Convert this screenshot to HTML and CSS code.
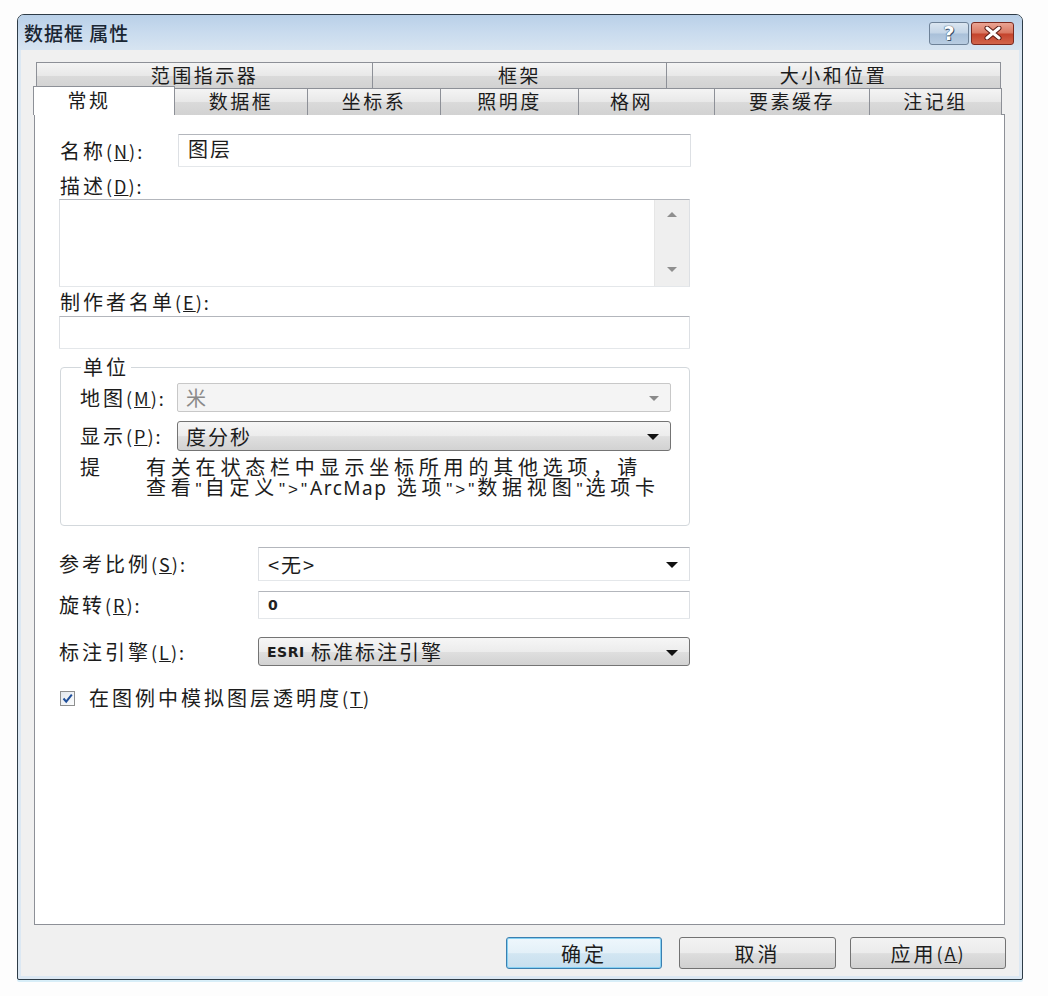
FILE: index.html
```html
<!DOCTYPE html>
<html lang="zh-CN">
<head>
<meta charset="utf-8">
<title>数据框 属性</title>
<link rel="stylesheet" href="styles.css">
</head>
<body>
<div class="desk">
  <div class="window">
    <div class="titlebar">
      <span class="title">数据框 属性</span>
      <div class="tb-btns">
        <span class="tb-btn tb-help">?</span>
        <span class="tb-btn tb-close">
          <svg width="18" height="14" viewBox="0 0 18 14"><path d="M3 2 L15 12 M15 2 L3 12" stroke="#5a1a12" stroke-width="5" stroke-linecap="round"/><path d="M3 2 L15 12 M15 2 L3 12" stroke="#ffffff" stroke-width="3" stroke-linecap="round"/></svg>
        </span>
      </div>
    </div>
    <div class="client">
      <div class="tabs">
        <div class="tabrow row1">
          <div class="tab">范围指示器</div>
          <div class="tab">框架</div>
          <div class="tab">大小和位置</div>
        </div>
        <div class="tabrow row2">
          <div class="tab selected">常规</div>
          <div class="tab">数据框</div>
          <div class="tab">坐标系</div>
          <div class="tab">照明度</div>
          <div class="tab tab-grid">格网</div>
          <div class="tab">要素缓存</div>
          <div class="tab">注记组</div>
        </div>
      </div>
      <div class="panel">
        <div class="form">
          <div class="name-row">
            <span class="lbl">名称<span class="mn">(<u>N</u>):</span></span>
            <div class="input name-input">图层</div>
          </div>
          <div class="lbl block desc-lbl">描述<span class="mn">(<u>D</u>):</span></div>
          <div class="textarea">
            <div class="vscroll"><span class="sarr up"></span><span class="sarr down"></span></div>
          </div>
          <div class="lbl block credit-lbl">制作者名单<span class="mn">(<u>E</u>):</span></div>
          <div class="input credit-input"></div>

          <fieldset class="group">
            <legend>单位</legend>
            <div class="grow">
              <span class="lbl">地图<span class="mn">(<u>M</u>):</span></span>
              <div class="combo disabled">米<span class="caret"></span></div>
            </div>
            <div class="grow grow2">
              <span class="lbl">显示<span class="mn">(<u>P</u>):</span></span>
              <div class="combo button">度分秒<span class="caret"></span></div>
            </div>
            <div class="tip">
              <span class="tip-head">提</span>
              <span class="tip-text">有关在状态栏中显示坐标所用的其他选项，请<br>查看<span class="q">"</span>自定义<span class="q">"&gt;"</span><span class="latin">ArcMap</span> 选项<span class="q">"&gt;"</span>数据视图<span class="q">"</span>选项卡</span>
            </div>
          </fieldset>

          <div class="brow brow1">
            <span class="lbl">参考比例<span class="mn">(<u>S</u>):</span></span>
            <div class="combo edit">&lt;无&gt;<span class="caret"></span></div>
          </div>
          <div class="brow brow2">
            <span class="lbl">旋转<span class="mn">(<u>R</u>):</span></span>
            <div class="input rot-input">0</div>
          </div>
          <div class="brow brow3">
            <span class="lbl">标注引擎<span class="mn">(<u>L</u>):</span></span>
            <div class="combo button"><span class="esri">ESRI</span>&nbsp;标准标注引擎<span class="caret"></span></div>
          </div>
          <div class="check-row">
            <span class="checkbox">
              <svg width="13" height="13" viewBox="0 0 13 13"><path d="M2.5 6.5 L5.2 9.6 L10.8 2.6" fill="none" stroke="#1f4f9a" stroke-width="2"/></svg>
            </span>
            <span class="lbl">在图例中模拟图层透明度<span class="mn">(<u>T</u>)</span></span>
          </div>
        </div>
      </div>
      <div class="buttons">
        <div class="btn default">确定</div>
        <div class="btn">取消</div>
        <div class="btn">应用<span class="mn">(<u>A</u>)</span></div>
      </div>
    </div>
  </div>
</div>
</body>
</html>
```

FILE: styles.css
```css
* { box-sizing: border-box; }
html, body { margin: 0; padding: 0; background: #fdfdfd; }
body {
  font-family: "Noto Sans CJK SC", "Noto Sans", sans-serif;
  color: #1c1c1c;
  font-size: 20px;
}
.desk {
  width: 1048px;
  height: 996px;
  padding: 14px 0 0 17px;
}
.window {
  width: 1006px;
  height: 966px;
  border: 1px solid #2e3c47;
  border-radius: 7px 7px 2px 2px;
  background: #dce8f3;
  display: flex;
  flex-direction: column;
  box-shadow: 0 2px 0 #d8eef8;
}
.titlebar {
  height: 35px;
  flex: none;
  display: flex;
  align-items: center;
  justify-content: space-between;
  padding: 0 8px 0 6px;
  background: linear-gradient(#b9d0e8, #c9dbee 50%, #d7e4f1);
  border-radius: 6px 6px 0 0;
}
.title {
  font-size: 19px;
  letter-spacing: 1px;
  color: #1a2633;
  font-weight: 500;
}
.tb-btns { display: flex; gap: 2px; margin-top: 1px; }
.tb-btn {
  height: 23px;
  border-radius: 3px;
  display: flex;
  align-items: center;
  justify-content: center;
}
.tb-help {
  width: 40px;
  border: 1px solid #6e8298;
  background: linear-gradient(#dbe6f1, #c3d4e6 48%, #a9c0d9 52%, #b9cde2);
  color: #ffffff;
  font-family: "DejaVu Sans", sans-serif;
  font-weight: bold;
  font-size: 19px;
  text-shadow: 0 0 1px #3d5168, 0 0 1px #3d5168, 1px 1px 0 #3d5168;
}
.tb-close {
  width: 43px;
  border: 1px solid #7b2a20;
  background: linear-gradient(#eaa493, #d97862 48%, #c4432c 52%, #d2654c);
}
.client {
  flex: 1;
  margin: 0 3px 3px 3px;
  background: #f0f0f0;
  padding: 12px 14px 7px 13px;
  display: flex;
  flex-direction: column;
}
.tabs { flex: none; position: relative; z-index: 1; }
.tabrow { display: grid; }
.row1 {
  margin-left: 2px;
  grid-template-columns: 336px 294px 334px;
  height: 26px;
}
.row2 {
  margin-left: -1px;
  grid-template-columns: 141px 133px 133px 138px 136px 155px 132px;
  height: 26px;
}
.tab {
  border: 1px solid #8d9097;
  border-bottom: none;
  margin-right: -1px;
  background: linear-gradient(#f4f4f4, #e8e8e8 50%, #dadada 52%, #d2d2d2);
  text-align: center;
  font-size: 19px;
  letter-spacing: 2.5px;
  line-height: 23px;
  color: #1c1c1c;
  overflow: hidden;
}
.tab.selected {
  background: #ffffff;
  margin-top: -2px;
  height: 29px;
  padding-right: 30px;
  line-height: 25px;
  position: relative;
  z-index: 2;
}
.tab-grid { padding-right: 30px; }
.panel {
  flex: 1;
  background: #ffffff;
  border: 1px solid #8d9097;
}
.form {
  width: 655px;
  padding: 19px 0 0 24px;
}
.lbl {
  font-size: 20px;
  letter-spacing: 3px;
  line-height: 22px;
  white-space: nowrap;
}
.mn { font-size: 18px; letter-spacing: 2px; }
.block { display: block; }
.name-row {
  display: grid;
  grid-template-columns: 118px 513px;
  align-items: center;
  padding-left: 1px;
}
.input {
  background: #ffffff;
  border: 1px solid;
  border-color: #b3b6bc #dde0e4 #e4e7ea #dde0e4;
  border-radius: 1px;
}
.name-input {
  height: 33px;
  padding: 1px 0 0 9px;
  font-size: 20px;
  letter-spacing: 2px;
  line-height: 26px;
}
.desc-lbl { margin-top: 8px; padding-left: 1px; }
.textarea {
  margin-top: 2px;
  width: 631px;
  height: 88px;
  background: #fff;
  border: 1px solid;
  border-color: #b3b6bc #dde0e4 #e4e7ea #dde0e4;
  display: flex;
  justify-content: flex-end;
}
.vscroll {
  width: 35px;
  background: #efefef;
  border-left: 1px solid #e6e6e6;
  display: flex;
  flex-direction: column;
  justify-content: space-between;
  align-items: center;
  padding: 12px 0 14px;
}
.sarr { width: 0; height: 0; border-left: 5px solid transparent; border-right: 5px solid transparent; }
.sarr.up { border-bottom: 5px solid #8f8f8f; }
.sarr.down { border-top: 5px solid #8f8f8f; }
.credit-lbl { margin-top: 4px; padding-left: 1px; }
.credit-input { margin-top: 3px; width: 631px; height: 33px; }

.group {
  margin: 7px 0 0 1px;
  width: 630px;
  min-width: 0;
  border: 1px solid #d3d8dc;
  border-radius: 4px;
  padding: 5px 18px 25px 19px;
}
.group legend {
  font-size: 20px;
  letter-spacing: 3px;
  line-height: 22px;
  padding: 0 2px;
  margin-left: 1px;
}
.grow {
  display: grid;
  grid-template-columns: 97px 494px;
  align-items: center;
}
.grow2 { margin-top: 9px; }
.combo {
  position: relative;
  font-size: 20px;
  letter-spacing: 2px;
  padding-left: 8px;
  display: flex;
  align-items: center;
}
.combo .caret {
  position: absolute;
  right: 11px;
  top: 50%;
  margin-top: -2px;
  width: 0; height: 0;
  border-left: 6px solid transparent;
  border-right: 6px solid transparent;
  border-top: 6px solid #111;
}
.combo.disabled {
  height: 29px;
  background: #f4f4f4;
  border: 1px solid #c8c8c8;
  border-radius: 2px;
  color: #8a8a8a;
}
.combo.disabled .caret { border-top-color: #8a8a8a; border-left-width: 5px; border-right-width: 5px; border-top-width: 5px; }
.combo.button {
  height: 30px;
  border: 1px solid #747474;
  border-radius: 3px;
  background: linear-gradient(#f6f6f6, #ececec 50%, #dfdfdf 52%, #d2d2d2);
}
.combo.edit {
  height: 34px;
  background: #fff;
  border: 1px solid;
  border-color: #b3b6bc #dde0e4 #e4e7ea #dde0e4;
  padding-left: 9px;
}
.tip {
  margin-top: 6px;
  display: grid;
  grid-template-columns: 66px auto;
  font-size: 20px;
  line-height: 20px;
}
.tip-head { letter-spacing: 2px; }
.tip-text { letter-spacing: 4.8px; white-space: nowrap; }
.tip-text .q {
  font-family: "Liberation Sans", sans-serif;
  font-size: 17px;
  letter-spacing: 3px;
}
.tip-text .latin {
  font-family: "Noto Sans", sans-serif;
  font-size: 19px;
  letter-spacing: 1.5px;
}

.brow {
  display: grid;
  grid-template-columns: 199px 432px;
  align-items: center;
}
.brow1 { margin-top: 21px; }
.brow2 { margin-top: 10px; }
.brow3 { margin-top: 18px; }
.brow .combo.button { height: 29px; }
.rot-input {
  height: 28px;
  padding-left: 9px;
  font-family: "DejaVu Sans", sans-serif;
  font-size: 14px;
  font-weight: bold;
  display: flex;
  align-items: center;
  color: #222;
}
.esri { font-family: "DejaVu Sans", sans-serif; font-size: 14px; font-weight: bold; letter-spacing: 0.5px; }
.check-row {
  margin-top: 21px;
  padding-left: 1px;
  display: flex;
  align-items: center;
  gap: 14px;
}
.checkbox {
  width: 15px;
  height: 15px;
  border: 1px solid #8e8f8f;
  background: linear-gradient(135deg, #e3e8ee, #fbfcfd);
  display: flex;
  align-items: center;
  justify-content: center;
}
.checkbox svg { display: block; }

.buttons {
  flex: none;
  margin-top: 12px;
  display: flex;
  justify-content: flex-end;
  margin-right: -1px;
}
.btn {
  width: 156px;
  height: 32px;
  border: 1px solid #727272;
  border-radius: 3px;
  background: linear-gradient(#f3f3f3, #ebebeb 50%, #dddddd 52%, #d0d0d0);
  display: flex;
  align-items: center;
  justify-content: center;
  font-size: 20px;
  letter-spacing: 3px;
  margin-left: 15px;
}
.btn:nth-child(2) { width: 157px; margin-left: 17px; }
.btn:nth-child(3) { margin-left: 14px; }
.btn.default {
  border-color: #3b7fb0;
  box-shadow: inset 0 0 0 1px #86d1f3;
  background: linear-gradient(#eef7fc, #e3f0f8 50%, #d2e6f2 52%, #c7dfee);
}
```
